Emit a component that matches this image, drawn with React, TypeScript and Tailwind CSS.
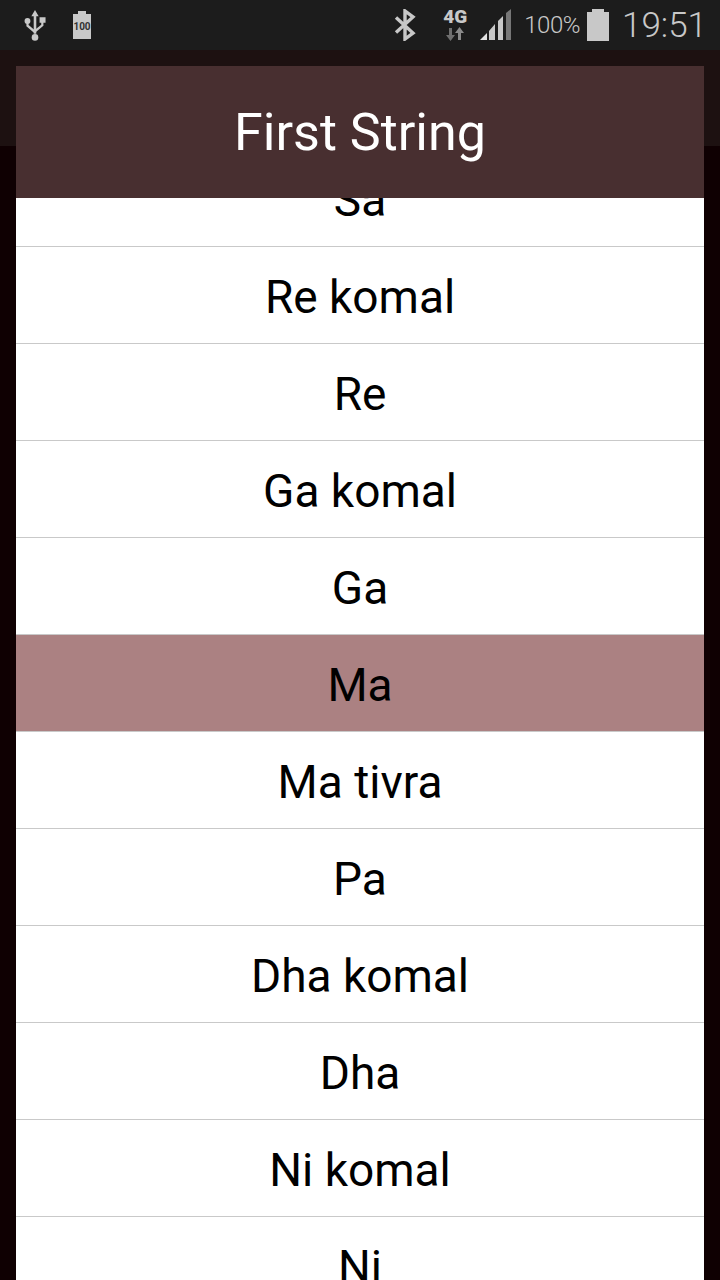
const notes = [
	{ name: "Sa" },
	{ name: "Re komal" },
	{ name: "Re" },
	{ name: "Ga komal" },
	{ name: "Ga" },
	{ name: "Ma", selected: true },
	{ name: "Ma tivra" },
	{ name: "Pa" },
	{ name: "Dha komal" },
	{ name: "Dha" },
	{ name: "Ni komal" },
	{ name: "Ni" },
];

function UsbIcon() {
	return (
		<svg width="22" height="35" viewBox="0 0 24 36" fill="#c8c8c8">
			<path d="M12 1l4 7h-2.600v19h-2.800V8H8z" />
			<circle cx="12" cy="31" r="3.600" />
			<circle cx="3.800" cy="13" r="3.200" />
			<rect x="17" y="9" width="6.500" height="6" />
			<path d="M2.600 13h2.400v4.500l6.500 5.500v3.400l-8.900-7.500zM18.800 14h2.400v4.400l-8.200 6.600v-3.200l5.800-4.600z" />
		</svg>
	);
}

function SmallBattery() {
	return (
		<div className="flex flex-col items-center">
			<div className="w-[8px] h-[3px] bg-[#c8c8c8]" />
			<div className="w-[18px] h-[25px] bg-[#c8c8c8] flex items-center justify-center text-[10px] font-bold text-[#333] leading-none">
				100
			</div>
		</div>
	);
}

function BluetoothIcon() {
	return (
		<svg width="22" height="32" viewBox="0 0 22 32" fill="none" stroke="#c8c8c8" strokeWidth="3.400">
			<path d="M2 8.500l17 15.500-8 6V2l8 6L2 23.500" />
		</svg>
	);
}

function NetworkIcon() {
	return (
		<div className="flex flex-col items-center w-[26px] mt-[-1px]">
			<span className="text-[19px] leading-[17px] font-black text-[#c8c8c8]">4G</span>
			<svg width="20" height="14" viewBox="0 0 20 14" className="mt-[2px]">
				<path d="M4 1h3v7h3l-4.500 6L1 8h3z" fill="#6f6f6f" />
				<path d="M13 13h3V6h3l-4.500-6L10 6h3z" fill="#8a8a8a" />
			</svg>
		</div>
	);
}

function SignalIcon() {
	return (
		<svg width="32" height="32" viewBox="0 0 32 32">
			<path d="M0 31L7 24v7z" fill="#e0e0e0" />
			<path d="M9 22l6-7v16H9z" fill="#c8c8c8" />
			<path d="M18 12l5-5v24h-5z" fill="#c8c8c8" />
			<path d="M26 4l5-4v31h-5z" fill="#777" />
		</svg>
	);
}

function StatusBar() {
	return (
		<div className="h-[50px] shrink-0 bg-[#1c1c1c] flex items-center pl-[24px] pr-[13px] text-[#c8c8c8]">
			<UsbIcon />
			<div className="ml-[27px]">
				<SmallBattery />
			</div>
			<div className="ml-auto flex items-center">
				<BluetoothIcon />
				<div className="ml-[26px]">
					<NetworkIcon />
				</div>
				<div className="ml-[12px]">
					<SignalIcon />
				</div>
				<span className="ml-[12px] text-[24px] font-light leading-none tracking-[-0.5px]">100%</span>
				<div className="ml-[7px] flex flex-col items-center">
					<div className="w-[12px] h-[3px] bg-[#c8c8c8]" />
					<div className="w-[22px] h-[29px] bg-[#c8c8c8]" />
				</div>
				<span className="ml-[13px] text-[35px] font-light leading-none">19:51</span>
			</div>
		</div>
	);
}

export default function App() {
	return (
		<div className="w-[720px] h-[1280px] overflow-hidden flex flex-col bg-[#0f0002] font-['Roboto',sans-serif]">
			<StatusBar />
			<div className="flex-1 min-h-0 flex flex-col relative">
				<div className="absolute inset-x-0 top-0 h-[96px] bg-[#1d1111]" />
				<div className="relative flex-1 min-h-0 flex flex-col mx-[16px] mt-[16px]">
					<div className="h-[132px] shrink-0 bg-[#482f30] flex items-center justify-center pt-[2px] text-white text-[52px]">
						First String
					</div>
					<div className="flex-1 min-h-0 overflow-hidden bg-white">
						<div className="mt-[-48px]">
							{notes.map((note) => (
								<div
									key={note.name}
									className={
										note.selected
											? "h-[97px] pt-[5px] bg-[#ab8182] border-b border-[#c9c9c9] flex items-center justify-center text-[46px] text-black"
											: "h-[97px] pt-[5px] border-b border-[#c9c9c9] flex items-center justify-center text-[46px] text-black"
									}
								>
									{note.name}
								</div>
							))}
						</div>
					</div>
				</div>
			</div>
		</div>
	);
}
